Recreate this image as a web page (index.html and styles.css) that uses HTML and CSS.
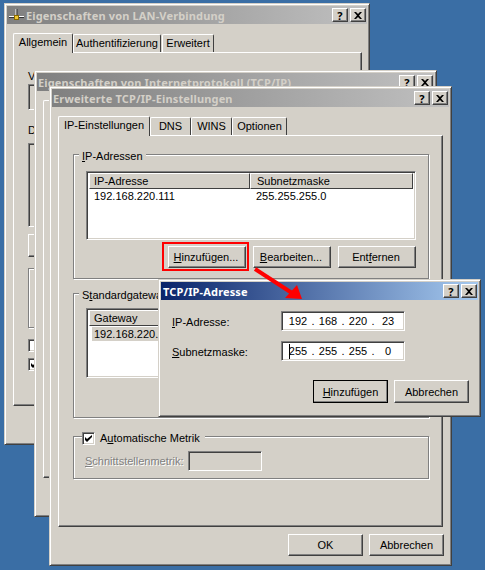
FILE: index.html
```html
<!DOCTYPE html>
<html lang="de">
<head>
    <meta charset="UTF-8">
    <meta name="viewport" content="width=device-width, initial-scale=1.0">
    <title>TCP/IP-Adresse</title>
    <link rel="stylesheet" href="styles.css">
</head>
<body>
    <div class="desktop">

        <!-- hinterstes Fenster -->
        <div class="window win-lan">
            <div class="titlebar">
                <svg class="title-icon" width="16" height="16" viewBox="0 0 16 16">
                    <path d="M7 2v7" stroke="#fff" stroke-width="1"/>
                    <path d="M8 2v7" stroke="#333" stroke-width="1"/>
                    <path d="M0 9.500h15" stroke="#fff" stroke-width="1"/>
                    <path d="M0 10.500h15" stroke="#333" stroke-width="1"/>
                    <rect x="5.500" y="8.500" width="4" height="4" fill="#f0c830" stroke="#8a6a00"/>
                </svg>
                <span class="title-text">Eigenschaften von LAN-Verbindung</span>
                <span class="cap-btn">?</span>
                <span class="cap-btn cap-close"><svg width="8" height="7" viewBox="0 0 8 7"><path d="M0 0h2l2 2 2-2h2L5 3.500 8 7H6L4 5 2 7H0l3-3.500z"/></svg></span>
            </div>
            <div class="tabs">
                <span class="tab active tab-allg">Allgemein</span>
                <span class="tab tab-auth">Authentifizierung</span>
                <span class="tab tab-erw">Erweitert</span>
            </div>
            <div class="panel lan-panel">
                <p class="lan-label">Verbindung herstellen über:</p>
                <div class="sunken lan-adapter"></div>
                <p class="lan-label lan-label-2">D</p>
                <div class="sunken lan-list"></div>
                <div class="raised lan-btn"></div>
                <div class="etched lan-desc"></div>
                <div class="check lan-check-first"></div>
                <div class="check lan-check"><svg width="7" height="7" viewBox="0 0 7 7"><path d="M0 2v3l2 2 5-5V0L2 4z"/></svg></div>
            </div>
        </div>

        <div class="window win-ip">
            <div class="titlebar">
                <span class="title-text">Eigenschaften von Internetprotokoll (TCP/IP)</span>
                <span class="cap-btn">?</span>
                <span class="cap-btn cap-close"><svg width="8" height="7" viewBox="0 0 8 7"><path d="M0 0h2l2 2 2-2h2L5 3.500 8 7H6L4 5 2 7H0l3-3.500z"/></svg></span>
            </div>
            <div class="tabs">
                <span class="tab active tab-empty"></span>
            </div>
            <div class="panel ip-panel"></div>
        </div>

        <div class="window win-adv">
            <div class="titlebar">
                <span class="title-text">Erweiterte TCP/IP-Einstellungen</span>
                <span class="cap-btn">?</span>
                <span class="cap-btn cap-close"><svg width="8" height="7" viewBox="0 0 8 7"><path d="M0 0h2l2 2 2-2h2L5 3.500 8 7H6L4 5 2 7H0l3-3.500z"/></svg></span>
            </div>
            <div class="tabs">
                <span class="tab active tab-ip">IP-Einstellungen</span>
                <span class="tab tab-dns">DNS</span>
                <span class="tab tab-wins">WINS</span>
                <span class="tab tab-opt">Optionen</span>
            </div>
            <div class="panel adv-panel">
                <div class="etched group group-ip">
                    <div class="group-title"><u>I</u>P-Adressen</div>
                    <div class="sunken listview list-ip">
                        <div class="list-head">
                            <span class="col col-1">IP-Adresse</span>
                            <span class="col col-2">Subnetzmaske</span>
                        </div>
                        <div class="list-row">
                            <span class="cell-1">192.168.220.111</span>
                            <span>255.255.255.0</span>
                        </div>
                    </div>
                    <div class="button-row">
                        <button class="btn btn-ip"><u>H</u>inzufügen...</button>
                        <button class="btn btn-ip"><u>B</u>earbeiten...</button>
                        <button class="btn btn-ip">Ent<u>f</u>ernen</button>
                    </div>
                </div>
                <div class="etched group group-gw">
                    <div class="group-title">S<u>t</u>andardgateways:</div>
                    <div class="sunken listview list-gw">
                        <div class="list-head">
                            <span class="col col-1">Gateway</span>
                        </div>
                        <div class="list-row list-row-sel">192.168.220.1</div>
                    </div>
                </div>
                <div class="etched group group-metric">
                    <div class="group-title metric-title">
                        <span class="check"><svg width="7" height="7" viewBox="0 0 7 7"><path d="M0 2v3l2 2 5-5V0L2 4z"/></svg></span>
                        <span>A<u>u</u>tomatische Metrik</span>
                    </div>
                    <div class="metric-row">
                        <span class="disabled"><u>S</u>chnittstellenmetrik:</span>
                        <span class="sunken metric-input"></span>
                    </div>
                </div>
            </div>
            <div class="footer-row">
                <button class="btn btn-foot">OK</button>
                <button class="btn btn-foot">Abbrechen</button>
            </div>
        </div>

        <div class="window win-dlg">
            <div class="titlebar active-title">
                <span class="title-text">TCP/IP-Adresse</span>
                <span class="cap-btn">?</span>
                <span class="cap-btn cap-close"><svg width="8" height="7" viewBox="0 0 8 7"><path d="M0 0h2l2 2 2-2h2L5 3.500 8 7H6L4 5 2 7H0l3-3.500z"/></svg></span>
            </div>
            <div class="form-row form-row-first">
                <span class="form-label"><u>I</u>P-Adresse:</span>
                <div class="sunken ip-input">
                    <span class="octet">192</span><span class="dot">.</span><span class="octet">168</span><span class="dot">.</span><span class="octet">220</span><span class="dot">.</span><span class="octet">23</span>
                </div>
            </div>
            <div class="form-row">
                <span class="form-label"><u>S</u>ubnetzmaske:</span>
                <div class="sunken ip-input">
                    <span class="octet"><span class="caret">255</span></span><span class="dot">.</span><span class="octet">255</span><span class="dot">.</span><span class="octet">255</span><span class="dot">.</span><span class="octet">0</span>
                </div>
            </div>
            <div class="dlg-buttons">
                <button class="btn btn-dlg btn-default"><u>H</u>inzufügen</button>
                <button class="btn btn-dlg">Abbrechen</button>
            </div>
        </div>

        <!-- rote Markierung -->
        <div class="red-box"></div>
        <svg class="red-arrow" width="60" height="45" viewBox="0 0 60 45">
            <path d="M3 4 L40 28" stroke="#f00" stroke-width="4" fill="none"/>
            <path d="M50 34 L33 33 L45 20 Z" fill="#f00"/>
        </svg>
    </div>
</body>
</html>
```

FILE: styles.css
```css
html, body {
    margin: 0;
    padding: 0;
}

body {
    font-family: "Liberation Sans", "Noto Sans", sans-serif;
    font-size: 11px;
    color: #000;
    background-color: #3a6ea5;
}

.desktop {
    position: relative;
    width: 485px;
    height: 570px;
    overflow: hidden;
}

p {
    margin: 0;
}

/* Fenster */
.window {
    position: absolute;
    z-index: 0;
    box-sizing: border-box;
    padding: 2px;
    background-color: #d4d0c8;
    border: 1px solid;
    border-color: #d4d0c8 #404040 #404040 #d4d0c8;
    box-shadow: inset 1px 1px 0 #fff, inset -1px -1px 0 #808080;
}

.win-lan {
    left: 4px;
    top: 3px;
    width: 366px;
    height: 442px;
}

.win-ip {
    left: 34px;
    top: 70px;
    width: 403px;
    height: 447px;
}

.win-adv {
    left: 49px;
    top: 86px;
    width: 403px;
    height: 480px;
}

.win-dlg {
    left: 158px;
    top: 279px;
    width: 323px;
    height: 138px;
}

.titlebar {
    display: flex;
    align-items: center;
    height: 18px;
    padding: 0 1px;
    background: linear-gradient(to right, #808080, #c0c0c0);
    color: #d4d0c8;
    font-family: "Noto Sans", sans-serif;
    font-weight: bold;
    letter-spacing: 0.15px;
}

.active-title {
    padding-left: 2px;
    background: linear-gradient(to right, #0a246a, #a6caf0);
    color: #fff;
}

.title-icon {
    margin: 0 1px 0 1px;
}

.title-text {
    flex: 1;
    white-space: nowrap;
}

.cap-btn {
    box-sizing: border-box;
    width: 16px;
    height: 14px;
    display: flex;
    align-items: center;
    justify-content: center;
    color: #000;
    font-size: 11px;
    line-height: 1;
    background-color: #d4d0c8;
    border: 1px solid;
    border-color: #fff #404040 #404040 #fff;
    box-shadow: inset -1px -1px 0 #808080;
}

.cap-close {
    margin-left: 2px;
}

/* Register */
.tabs {
    display: flex;
    align-items: flex-end;
    height: 20px;
    margin: 8px 0 0 6px;
}

.tab {
    box-sizing: border-box;
    height: 18px;
    padding: 1px 0 0;
    line-height: 15px;
    text-align: center;
    white-space: nowrap;
    background-color: #d4d0c8;
    border: 1px solid #fff;
    border-right: 1px solid #404040;
    border-bottom: none;
    border-radius: 2px 2px 0 0;
}

.tab.active {
    height: 20px;
    padding: 1px 0 0;
    margin-bottom: -1px;
    position: relative;
    z-index: 1;
}

.tab-allg {
    width: 60px;
}

.tab-auth {
    width: 88px;
}

.tab-erw {
    width: 52px;
    margin-left: 1px;
}

.tab-empty {
    width: 60px;
}

.tab-ip {
    width: 92px;
}

.tab-dns {
    width: 41px;
}

.tab-wins {
    width: 41px;
}

.tab-opt {
    width: 55px;
}

.panel {
    box-sizing: border-box;
    margin-left: 6px;
    background-color: #d4d0c8;
    border: 1px solid;
    border-color: #fff #404040 #404040 #fff;
    box-shadow: inset -1px -1px 0 #808080;
}

.lan-panel {
    width: 349px;
    height: 354px;
    padding: 15px 14px;
}

.ip-panel {
    width: 380px;
    height: 359px;
}

.adv-panel {
    width: 385px;
    height: 392px;
    padding: 18px 14px 0;
}

/* Rahmen */
.sunken {
    box-sizing: border-box;
    border: 1px solid;
    border-color: #808080 #fff #fff #808080;
    box-shadow: inset 1px 1px 0 #404040, inset -1px -1px 0 #d4d0c8;
}

.raised {
    box-sizing: border-box;
    border: 1px solid;
    border-color: #fff #404040 #404040 #fff;
    box-shadow: inset -1px -1px 0 #808080;
}

.etched {
    box-sizing: border-box;
    border: 1px solid #808080;
    box-shadow: 1px 1px 0 #fff, inset 1px 1px 0 #fff;
}

/* LAN-Fenster, nur der linke Rand ist zu sehen */
.lan-label {
    height: 16px;
    line-height: 16px;
}

.lan-adapter {
    width: 300px;
    height: 26px;
}

.lan-label-2 {
    margin-top: 12px;
}

.lan-list {
    width: 300px;
    height: 84px;
    margin-top: 5px;
}

.lan-btn {
    width: 80px;
    height: 23px;
    margin-top: 7px;
}

.lan-desc {
    width: 300px;
    height: 60px;
    margin-top: 11px;
}

.lan-check-first {
    margin-top: 11px;
}

.lan-check {
    margin-top: 6px;
}

.check {
    box-sizing: border-box;
    flex: none;
    display: flex;
    align-items: center;
    justify-content: center;
    width: 13px;
    height: 13px;
    background-color: #fff;
    border: 1px solid;
    border-color: #808080 #fff #fff #808080;
    box-shadow: inset 1px 1px 0 #404040, inset -1px -1px 0 #d4d0c8;
}

/* Gruppen */
.group {
    width: 356px;
    padding: 0 12px;
}

.group-title {
    width: fit-content;
    height: 14px;
    margin: -6px 0 0 -7px;
    padding: 0 3px;
    line-height: 14px;
    background-color: #d4d0c8;
}

.group-ip {
    height: 125px;
}

.group-gw {
    height: 125px;
    margin-top: 14px;
}

.group-metric {
    height: 43px;
    margin-top: 18px;
}

.listview {
    width: 330px;
    background-color: #fff;
    padding: 1px 2px 2px;
}

.list-ip {
    height: 69px;
    margin-top: 8px;
}

.list-gw {
    height: 70px;
    margin-top: 6px;
}

.list-head {
    display: flex;
    height: 16px;
}

.col {
    box-sizing: border-box;
    height: 16px;
    padding-left: 4px;
    line-height: 15px;
    background-color: #d4d0c8;
    border: 1px solid;
    border-color: #fff #404040 #404040 #fff;
}

.col-1 {
    width: 162px;
}

.col-2 {
    width: 164px;
    padding-left: 6px;
}

.list-row {
    display: flex;
    height: 15px;
    padding: 0 0 0 5px;
    line-height: 15px;
}

.cell-1 {
    width: 162px;
}

.list-row-sel {
    width: 95px;
    height: 14px;
    margin: 1px 0 0 3px;
    padding-left: 2px;
    line-height: 14px;
    background-color: #d4d0c8;
}

.button-row {
    display: flex;
    justify-content: flex-end;
    gap: 7px;
    margin-top: 6px;
}

.btn {
    box-sizing: border-box;
    padding: 0;
    font: inherit;
    color: #000;
    background-color: #d4d0c8;
    border: 1px solid;
    border-color: #fff #404040 #404040 #fff;
    box-shadow: inset -1px -1px 0 #808080;
}

.btn-ip {
    width: 78px;
    height: 22px;
    padding-right: 2px;
}

.footer-row {
    display: flex;
    justify-content: flex-end;
    gap: 6px;
    margin: 7px 5px 0 0;
}

.btn-foot {
    width: 75px;
    height: 22px;
}

/* Metrik */
.metric-title {
    display: flex;
    align-items: center;
    gap: 5px;
    margin: -6px 0 0 -4px;
    padding: 0 5px 0 0;
}

.metric-row {
    display: flex;
    align-items: center;
    gap: 7px;
    margin: 6px 0 0 -1px;
}

.disabled {
    width: 96px;
    color: #808080;
    text-shadow: 1px 1px 0 #fff;
}

.metric-input {
    width: 74px;
    height: 20px;
}

/* Dialog */
.form-row {
    display: flex;
    align-items: center;
    height: 20px;
    margin: 10px 0 0 11px;
}

.form-row-first {
    margin-top: 11px;
}

.form-label {
    width: 109px;
    padding-top: 1px;
}

.ip-input {
    display: flex;
    width: 124px;
    height: 20px;
    padding: 0 4px;
    line-height: 19px;
    background-color: #fff;
}

.octet {
    width: 24px;
    text-align: center;
}

.dot {
    width: 6px;
    text-align: center;
}

.caret {
    display: inline-block;
    line-height: 15px;
    box-shadow: inset 1px 0 0 #000;
}

.dlg-buttons {
    display: flex;
    justify-content: flex-end;
    gap: 6px;
    margin: 19px 9px 0 0;
}

.btn-dlg {
    width: 75px;
    height: 23px;
}

.btn-default {
    outline: 1px solid #000;
    outline-offset: -1px;
}

/* rote Markierung */
.red-box {
    position: absolute;
    left: 162px;
    top: 242px;
    box-sizing: border-box;
    width: 87px;
    height: 29px;
    border: 2px solid #f00;
}

.red-arrow {
    position: absolute;
    left: 252px;
    top: 265px;
}
```
